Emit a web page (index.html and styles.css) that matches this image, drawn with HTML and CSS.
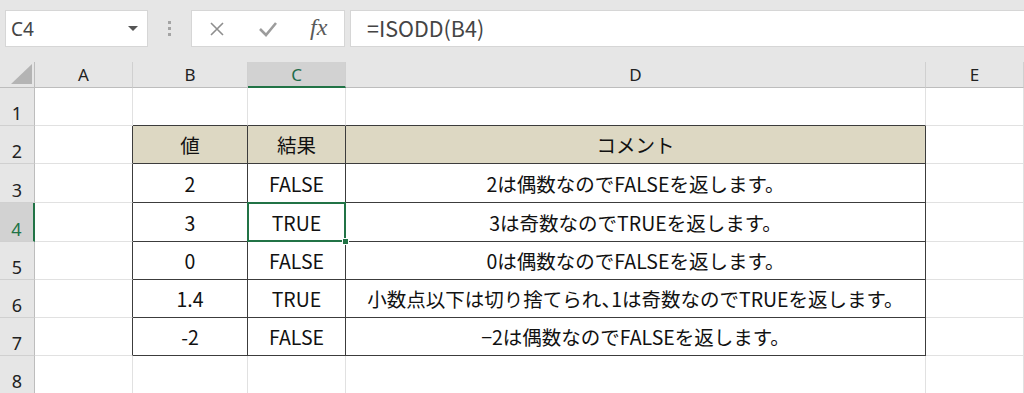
FILE: index.html
```html
<!DOCTYPE html>
<html lang="ja">
<head>
    <meta charset="UTF-8">
    <title>ISODD</title>
    <link rel="stylesheet" href="styles.css">
</head>
<body>
<div class="formula-bar">
    <div class="name-box"><span>C4</span><span class="caret"></span></div>
    <div class="grip"><i></i><i></i><i></i></div>
    <div class="fx-buttons">
        <span class="btn">
            <svg width="16" height="16" viewBox="0 0 16 16"><path d="M2 2 L14 14 M14 2 L2 14" stroke="#8e8e8e" stroke-width="1.6" fill="none"/></svg>
        </span>
        <span class="btn">
            <svg width="20" height="16" viewBox="0 0 20 16"><path d="M2 8 L8 14 L18 2" stroke="#9c9c9c" stroke-width="2.6" fill="none"/></svg>
        </span>
        <span class="btn fx">fx</span>
    </div>
    <div class="formula">=ISODD(B4)</div>
</div>

<div class="sheet">
    <div class="corner"></div>
    <div class="head">A</div>
    <div class="head">B</div>
    <div class="head active">C</div>
    <div class="head">D</div>
    <div class="head">E</div>

    <!-- row 1 -->
    <div class="row-num">1</div>
    <div class="cell"></div>
    <div class="cell edge-b"></div>
    <div class="cell edge-b"></div>
    <div class="cell edge-b"></div>
    <div class="cell"></div>

    <!-- row 2: table header -->
    <div class="row-num">2</div>
    <div class="cell edge-r"></div>
    <div class="t th">値</div>
    <div class="t th">結果</div>
    <div class="t th">コメント</div>
    <div class="cell"></div>

    <div class="row-num">3</div>
    <div class="cell edge-r"></div>
    <div class="t">2</div>
    <div class="t">FALSE</div>
    <div class="t">2は偶数なのでFALSEを返します。</div>
    <div class="cell"></div>

    <div class="row-num active">4</div>
    <div class="cell edge-r"></div>
    <div class="t">3</div>
    <div class="t sel">TRUE<span class="handle"></span></div>
    <div class="t">3は奇数なのでTRUEを返します。</div>
    <div class="cell"></div>

    <div class="row-num">5</div>
    <div class="cell edge-r"></div>
    <div class="t">0</div>
    <div class="t">FALSE</div>
    <div class="t">0は偶数なのでFALSEを返します。</div>
    <div class="cell"></div>

    <div class="row-num">6</div>
    <div class="cell edge-r"></div>
    <div class="t">1.4</div>
    <div class="t">TRUE</div>
    <div class="t">小数点以下は切り捨てられ<span class="half">、</span>1は奇数なのでTRUEを返します。</div>
    <div class="cell"></div>

    <div class="row-num">7</div>
    <div class="cell edge-r"></div>
    <div class="t">-2</div>
    <div class="t">FALSE</div>
    <div class="t">−2は偶数なのでFALSEを返します。</div>
    <div class="cell"></div>

    <div class="row-num">8</div>
    <div class="cell"></div>
    <div class="cell"></div>
    <div class="cell"></div>
    <div class="cell"></div>
    <div class="cell"></div>
</div>
</body>
</html>
```

FILE: styles.css
```css
* {
    box-sizing: border-box;
}
body {
    margin: 0;
    width: 1024px;
    height: 393px;
    overflow: hidden;
    background-color: #ffffff;
    font-family: 'Noto Sans', sans-serif;
    color: #222;
}

/* formula bar */
.formula-bar {
    display: flex;
    align-items: flex-start;
    height: 62px;
    padding: 10px 0 0 5px;
    background-color: #e6e6e6;
}
.name-box {
    width: 143px;
    height: 37px;
    display: flex;
    align-items: center;
    justify-content: space-between;
    padding: 0 9px 0 5px;
    background-color: #ffffff;
    border: 1px solid #d6d6d6;
    font-size: 19px;
    color: #444;
}
.caret {
    border-left: 5px solid transparent;
    border-right: 5px solid transparent;
    border-top: 5px solid #555;
}
.grip {
    width: 43px;
    height: 37px;
    display: flex;
    flex-direction: column;
    align-items: center;
    justify-content: center;
    gap: 3px;
}
.grip i {
    width: 3px;
    height: 3px;
    background-color: #a4a4a4;
}
.fx-buttons {
    width: 154px;
    height: 37px;
    display: flex;
    align-items: center;
    background-color: #ffffff;
    border: 1px solid #d6d6d6;
}
.btn {
    flex: 1;
    display: flex;
    align-items: center;
    justify-content: center;
}
.fx {
    font-family: 'Liberation Serif', serif;
    font-style: italic;
    font-size: 24px;
    color: #5a5a5a;
    padding-bottom: 3px;
}
.formula {
    flex: 1;
    height: 37px;
    margin-left: 5px;
    padding-left: 16px;
    background-color: #ffffff;
    border: 1px solid #d6d6d6;
    border-right: none;
    font-family: 'Noto Sans CJK JP', sans-serif;
    font-size: 21.5px;
    line-height: 34px;
    color: #444;
}

/* grid */
.sheet {
    display: grid;
    grid-template-columns: 35px 98px 115px 98px 580px 98px;
    grid-template-rows: 26px 38px 38px 39px 39px 38px 38px 38px 38px;
}
.corner {
    display: flex;
    justify-content: flex-end;
    align-items: flex-end;
    padding: 0 2px 3px 0;
    background-color: #e6e6e6;
    border-right: 1px solid #bdbdbd;
    border-bottom: 1px solid #bdbdbd;
}
.corner::after {
    content: "";
    width: 21px;
    height: 20px;
    background-color: #b4b4b4;
    clip-path: polygon(100% 0, 100% 100%, 0 100%);
}
.head {
    display: flex;
    align-items: center;
    justify-content: center;
    background-color: #e6e6e6;
    border-right: 1px solid #d0d0d0;
    border-bottom: 1px solid #bdbdbd;
    font-size: 17px;
    color: #222;
}
.head.active {
    background-color: #d2d2d2;
    color: #1e6b4a;
    border-bottom: 2px solid #217346;
}
.row-num {
    display: flex;
    align-items: flex-end;
    justify-content: center;
    padding-bottom: 0;
    background-color: #e6e6e6;
    border-right: 1px solid #bdbdbd;
    border-bottom: 1px solid #d0d0d0;
    font-size: 18px;
    color: #222;
}
.row-num.active {
    background-color: #d2d2d2;
    color: #217346;
    border-right: 2px solid #217346;
}
.cell {
    border-right: 1px solid #e1e1e1;
    border-bottom: 1px solid #e1e1e1;
}
.cell.edge-r {
    border-right-color: #3c3c3c;
}
.cell.edge-b {
    border-bottom-color: #3c3c3c;
}

/* table */
.t {
    display: flex;
    align-items: center;
    justify-content: center;
    border-right: 1px solid #3c3c3c;
    border-bottom: 1px solid #3c3c3c;
    font-family: 'Noto Sans CJK JP', sans-serif;
    font-size: 19.5px;
    color: #111;
    white-space: nowrap;
}
.th {
    background-color: #ddd8c3;
}
.half {
    font-feature-settings: "halt";
}
.sel {
    position: relative;
}
.sel::after {
    content: "";
    position: absolute;
    left: -1px;
    top: -1px;
    right: -1px;
    bottom: -1px;
    border: 2px solid #217346;
}
.handle {
    position: absolute;
    right: -4px;
    bottom: -4px;
    width: 7px;
    height: 7px;
    background-color: #217346;
    border: 1px solid #ffffff;
    z-index: 1;
}
```
